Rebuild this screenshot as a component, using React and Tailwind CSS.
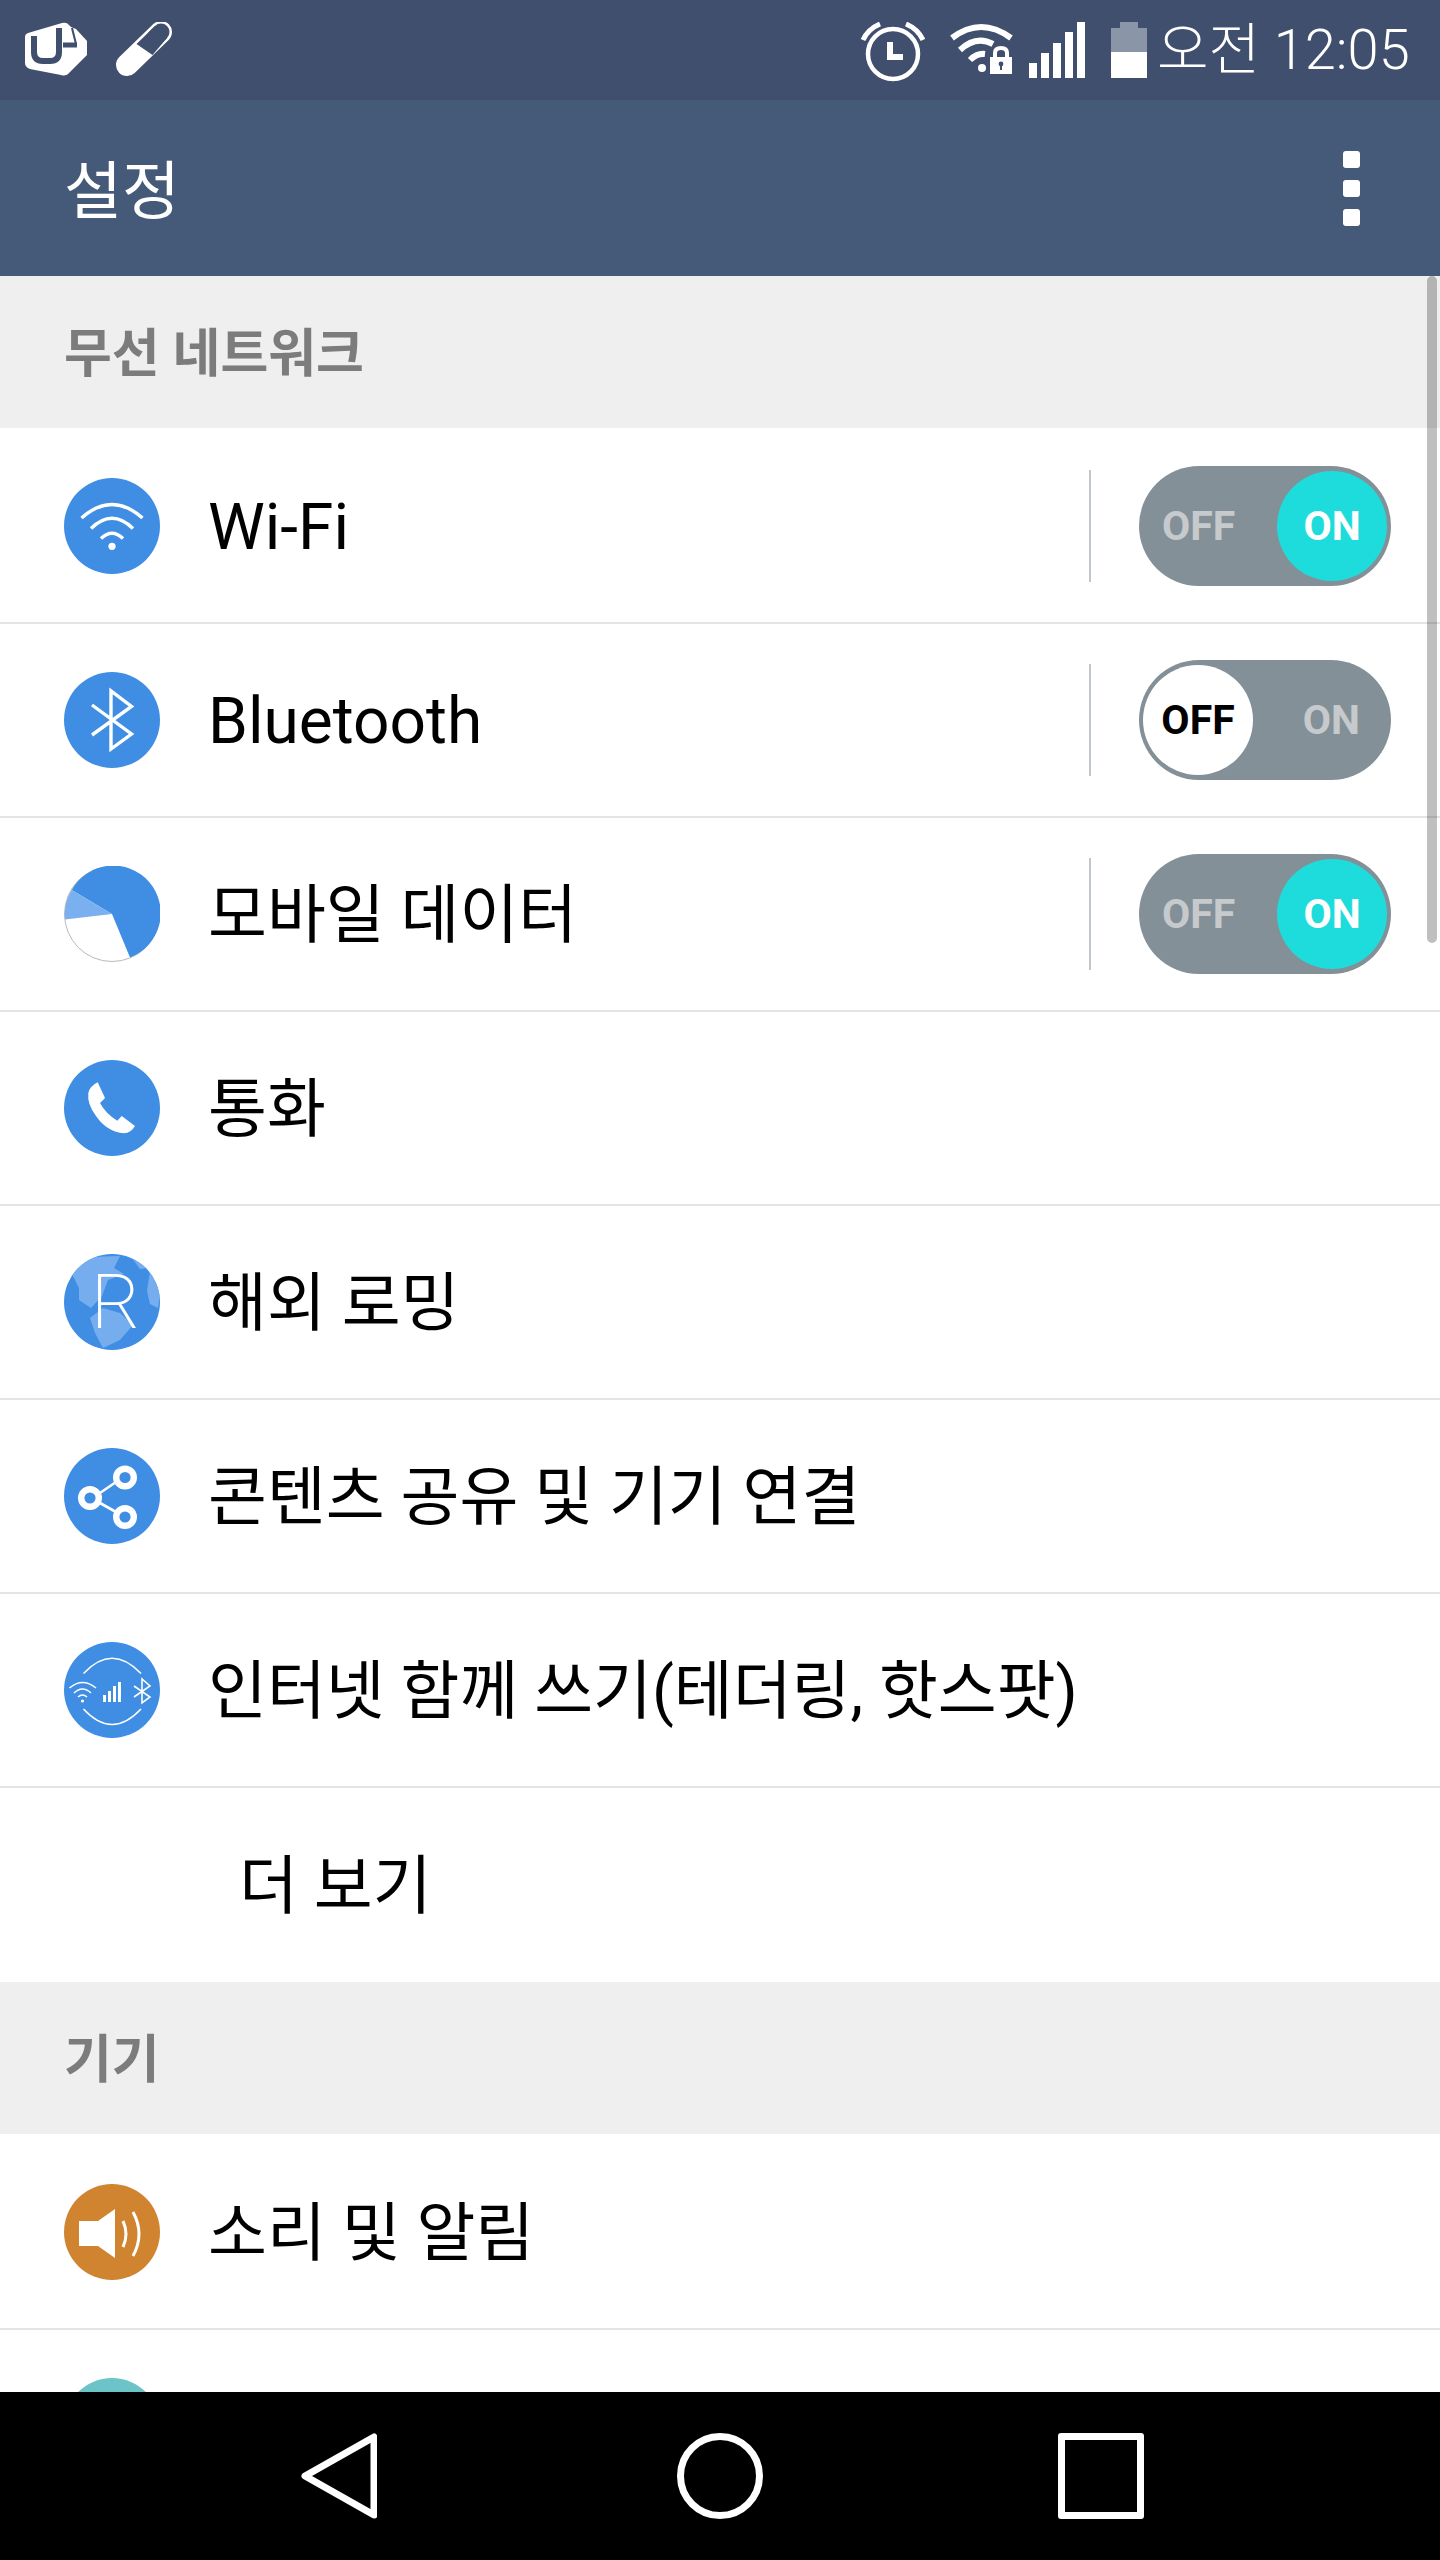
import { useId } from "react";

const FONT = "font-['Roboto','Noto_Sans_CJK_KR',sans-serif]";

function Circle({ color = "bg-[#3f8ee4]", children }) {
  return (
    <div className={`w-24 h-24 rounded-full shrink-0 ${color}`}>
      <svg viewBox="0 0 96 96" className="w-24 h-24" fill="none" stroke="white">
        {children}
      </svg>
    </div>
  );
}

function WifiIcon() {
  return (
    <Circle>
      <g strokeWidth="3.4">
        <path d="M17.5 40Q48 13 78.5 40" />
        <path d="M27 50.5Q48 30 69 50.5" />
        <path d="M37 60.5Q48 50 59 60.5" />
      </g>
      <circle cx="48" cy="68.3" r="3.6" fill="white" stroke="none" />
    </Circle>
  );
}

function BluetoothIcon() {
  return (
    <Circle>
      <path d="M28 33L67.5 62 47 77V19L67.5 34.5 28 63" strokeWidth="3.4" />
    </Circle>
  );
}

function DataIcon() {
  return (
    <svg viewBox="0 0 96 96" className="w-24 h-24 shrink-0">
      <circle cx="48" cy="48" r="47.5" fill="white" stroke="#b9b9b9" strokeWidth="1" />
      <path d="M48 48L7.7 24A47.5 47.5 0 1 1 66 91.5Z" fill="#3f8ee4" />
      <path d="M48 48L7.7 24A47.5 47.5 0 0 0 .9 53.5Z" fill="#7ab0ef" />
    </svg>
  );
}

function PhoneIcon() {
  return (
    <Circle>
      <path
        d="M33.7 22.3L41 38 36 43Q42 54 53.3 60.7L57.7 56 71 66Q67 73 60 73.3 43 72 32 56 23 44 24.3 33 26 26 33.7 22.3Z"
        fill="white"
        stroke="none"
      />
    </Circle>
  );
}

function RoamingIcon() {
  const id = useId();
  return (
    <Circle>
      <clipPath id={id}>
        <circle cx="48" cy="48" r="48" />
      </clipPath>
      <g clipPath={`url(#${id})`} fill="#76adee" stroke="none">
        <path d="M8 20L26 3 56 2 50 14 60 20 44 26 38 42 27 54 15 46 15 34Z" />
        <path d="M26 64L39 54 56 59 69 71 56 86 39 94 31 79Z" />
        <path d="M83 37L86 17 97 32 94 54 86 50Z" />
        <path d="M68 4L84 14 76 15Z" />
      </g>
      <text
        x="27"
        y="74"
        fontFamily="Roboto"
        fontWeight="200"
        fontSize="76"
        fill="white"
        stroke="none"
      >
        R
      </text>
    </Circle>
  );
}

function ShareIcon() {
  return (
    <Circle>
      <g strokeWidth="2.6">
        <path d="M36 45L52 34" />
        <path d="M36 55L52 64" />
      </g>
      <g strokeWidth="6.4">
        <circle cx="61" cy="29.5" r="8.8" />
        <circle cx="26" cy="50" r="8.8" />
        <circle cx="61" cy="69" r="8.8" />
      </g>
    </Circle>
  );
}

function TetherIcon() {
  return (
    <Circle>
      <g strokeWidth="1.6">
        <path d="M19.5 31.5Q48 1 77 31.5" />
        <path d="M19.5 67Q48 98 77 67" />
        <path d="M5.5 46Q18.5 35 32 46" />
        <path d="M10 51Q18.5 43 27 51" />
        <path d="M14 55Q18.5 51 23 55" />
        <path d="M70 44L86 55 78 61V37L86 44 70 55" />
      </g>
      <circle cx="18.5" cy="59" r="1.6" fill="white" stroke="none" />
      <g fill="white" stroke="none">
        <rect x="39" y="53" width="3" height="7" />
        <rect x="44" y="49" width="3" height="11" />
        <rect x="49" y="44" width="3" height="16" />
        <rect x="54" y="40" width="3" height="20" />
      </g>
    </Circle>
  );
}

function SoundIcon() {
  return (
    <Circle color="bg-[#d08430]">
      <path d="M15 37H34L51 25V74L34 62H15Z" fill="white" stroke="none" />
      <path d="M59 37Q65 50 59 63" strokeWidth="3" />
      <path d="M69 28Q81 50 69 72" strokeWidth="3" />
    </Circle>
  );
}

function Toggle({ on }) {
  const label = "text-[41px] leading-none font-bold";
  const thumb = "w-[110px] h-[110px] rounded-full flex items-center justify-center";
  return (
    <div className="w-[252px] h-[120px] rounded-full bg-[#849097] flex items-center justify-between px-[4px]">
      {on ? (
        <>
          <span className={`${label} text-[#c6cacc] ml-[19px]`}>OFF</span>
          <div className={`${thumb} bg-[#1edcdc]`}>
            <span className={`${label} text-white`}>ON</span>
          </div>
        </>
      ) : (
        <>
          <div className={`${thumb} bg-white`}>
            <span className={`${label} text-black`}>OFF</span>
          </div>
          <span className={`${label} text-[#c6cacc] mr-[27px]`}>ON</span>
        </>
      )}
    </div>
  );
}

function Row({ icon, label, toggle, first, indent }) {
  return (
    <div className={`${indent ? "h-[196px]" : "h-[194px]"} flex items-center bg-white pl-16 pr-[49px] border-t-2 ${first ? "border-white" : "border-[#e4e4e4]"}`}>
      {icon}
      <span className={`text-[64px] leading-none text-black whitespace-nowrap pt-[3px] ${indent ? "ml-[178px] -translate-x-[3px]" : "ml-[48px]"}`}>
        {label}
      </span>
      {toggle !== undefined && (
        <div className="ml-auto flex items-center">
          <div className="w-[2px] h-[112px] bg-[#c0c6cc] mr-[48px]" />
          <Toggle on={toggle} />
        </div>
      )}
    </div>
  );
}

function SectionHeader({ title }) {
  return (
    <div className="h-[152px] bg-[#efefef] flex items-center pl-16 pt-[5px]">
      <span className="text-[52px] leading-none font-bold text-[#7c7c7c]">{title}</span>
    </div>
  );
}

function StatusBar() {
  return (
    <div className="h-[100px] bg-[#404f6d] flex items-start shrink-0 text-white">
      {/* carrier logo */}
      <svg viewBox="0 0 62 55" className="w-[62px] h-[55px] ml-[25px] mt-[22px]">
        <path
          d="M3 11L37 1Q42 0 44 3L46 5 51 7 62 19V33L45 50Q41 55 36 53L10 48 5 47Q0 45 0 41V15Q0 12 3 11Z"
          fill="white"
        />
        <g fill="none" stroke="#404f6d" strokeWidth="6">
          <path d="M9 14V30Q9 39 18 39H25Q34 39 34 30V6" />
          <path d="M38 23H52" strokeWidth="5" />
          <path d="M47 6L51 22" strokeWidth="2" />
        </g>
      </svg>
      {/* pill */}
      <svg viewBox="0 0 57 56" className="w-[57px] h-[56px] ml-[28px] mt-[22px]">
        <line x1="46" y1="10" x2="12" y2="43" stroke="white" strokeWidth="22" strokeLinecap="round" />
        <line x1="46" y1="10" x2="40" y2="16" stroke="#404f6d" strokeWidth="17" strokeLinecap="round" />
        <polygon points="21.5,22 37.5,33 52,16 40,4" fill="#404f6d" />
      </svg>

      <div className="ml-auto flex items-start">
        {/* alarm */}
        <svg viewBox="0 0 65 60" className="w-[65px] h-[60px] mt-[22px]">
          <circle cx="33" cy="32" r="25" fill="none" stroke="white" strokeWidth="4.5" />
          <path d="M30 20V35H43" fill="none" stroke="white" strokeWidth="6" />
          <path d="M3 18Q8 7 20 2" fill="none" stroke="white" strokeWidth="5" />
          <path d="M63 18Q58 7 46 2" fill="none" stroke="white" strokeWidth="5" />
        </svg>
        {/* wifi with lock */}
        <svg viewBox="0 0 67 52" className="w-[67px] h-[52px] ml-[23px] mt-[23px]">
          <path d="M4 15Q33 -7 63 15" fill="none" stroke="white" strokeWidth="6" />
          <path d="M12 27Q28 12 45 21" fill="none" stroke="white" strokeWidth="6" />
          <path d="M22 37Q29 30 37 31" fill="none" stroke="white" strokeWidth="6" />
          <circle cx="34" cy="45" r="4" fill="white" />
          <rect x="42" y="34" width="22" height="17" fill="white" />
          <path d="M47 35V30Q47 25 53 25 59 25 59 30V35" fill="none" stroke="white" strokeWidth="4" />
          <circle cx="53" cy="41" r="2.4" fill="#404f6d" />
          <rect x="52" y="41" width="2" height="6" fill="#404f6d" />
        </svg>
        {/* signal */}
        <div className="flex items-end gap-[4px] h-[56px] ml-[14px] mt-[22px]">
          <div className="w-[8px] h-[15px] bg-white" />
          <div className="w-[8px] h-[25px] bg-white" />
          <div className="w-[8px] h-[35px] bg-white" />
          <div className="w-[8px] h-[46px] bg-white" />
          <div className="w-[8px] h-[56px] bg-white" />
        </div>
        {/* battery */}
        <div className="flex flex-col items-center w-[36px] ml-[26px] mt-[22px]">
          <div className="w-[18px] h-[6px] bg-[#8b95a8]" />
          <div className="w-[36px] h-[24px] bg-[#8b95a8]" />
          <div className="w-[36px] h-[26px] bg-white" />
        </div>
        <span className="w-[254px] text-[56px] leading-[100px] font-light ml-[10px] mr-[29px] whitespace-nowrap">오전 12:05</span>
      </div>
    </div>
  );
}

function AppBar() {
  return (
    <div className="h-[176px] bg-[#455a78] flex items-center justify-between pl-16 pr-[80px] shrink-0">
      <span className="text-[63px] leading-none text-white pt-[7px]">설정</span>
      <div className="flex flex-col gap-[12px]">
        <div className="w-[17px] h-[17px] rounded-[3px] bg-white" />
        <div className="w-[17px] h-[17px] rounded-[3px] bg-white" />
        <div className="w-[17px] h-[17px] rounded-[3px] bg-white" />
      </div>
    </div>
  );
}

function NavBar() {
  return (
    <div className="h-[168px] bg-black shrink-0 flex items-start pt-[41px]">
      <svg viewBox="0 0 76 86" className="w-[76px] h-[86px] ml-[301px]">
        <path d="M73 4V82L4 43Z" fill="none" stroke="white" strokeWidth="7" strokeLinejoin="round" />
      </svg>
      <div className="w-[86px] h-[86px] rounded-full border-[7px] border-white ml-[300px]" />
      <div className="w-[86px] h-[86px] rounded-[3px] border-[7px] border-white ml-[295px]" />
    </div>
  );
}

export default function App() {
  return (
    <div className={`w-[1440px] h-[2560px] flex flex-col overflow-hidden bg-white ${FONT}`}>
      <StatusBar />
      <AppBar />
      <div className="relative flex-1 overflow-hidden">
        <SectionHeader title="무선 네트워크" />
        <Row icon={<WifiIcon />} label="Wi-Fi" toggle={true} first />
        <Row icon={<BluetoothIcon />} label="Bluetooth" toggle={false} />
        <Row icon={<DataIcon />} label="모바일 데이터" toggle={true} />
        <Row icon={<PhoneIcon />} label="통화" />
        <Row icon={<RoamingIcon />} label="해외 로밍" />
        <Row icon={<ShareIcon />} label="콘텐츠 공유 및 기기 연결" />
        <Row icon={<TetherIcon />} label="인터넷 함께 쓰기(테더링, 핫스팟)" />
        <Row label="더 보기" indent />
        <SectionHeader title="기기" />
        <Row icon={<SoundIcon />} label="소리 및 알림" first />
        <Row icon={<Circle color="bg-[#6cc3c8]" />} label="" />
        {/* scrollbar */}
        <div className="absolute top-0 right-[3px] w-[10px] h-[667px] rounded-full bg-black/25" />
      </div>
      <NavBar />
    </div>
  );
}
